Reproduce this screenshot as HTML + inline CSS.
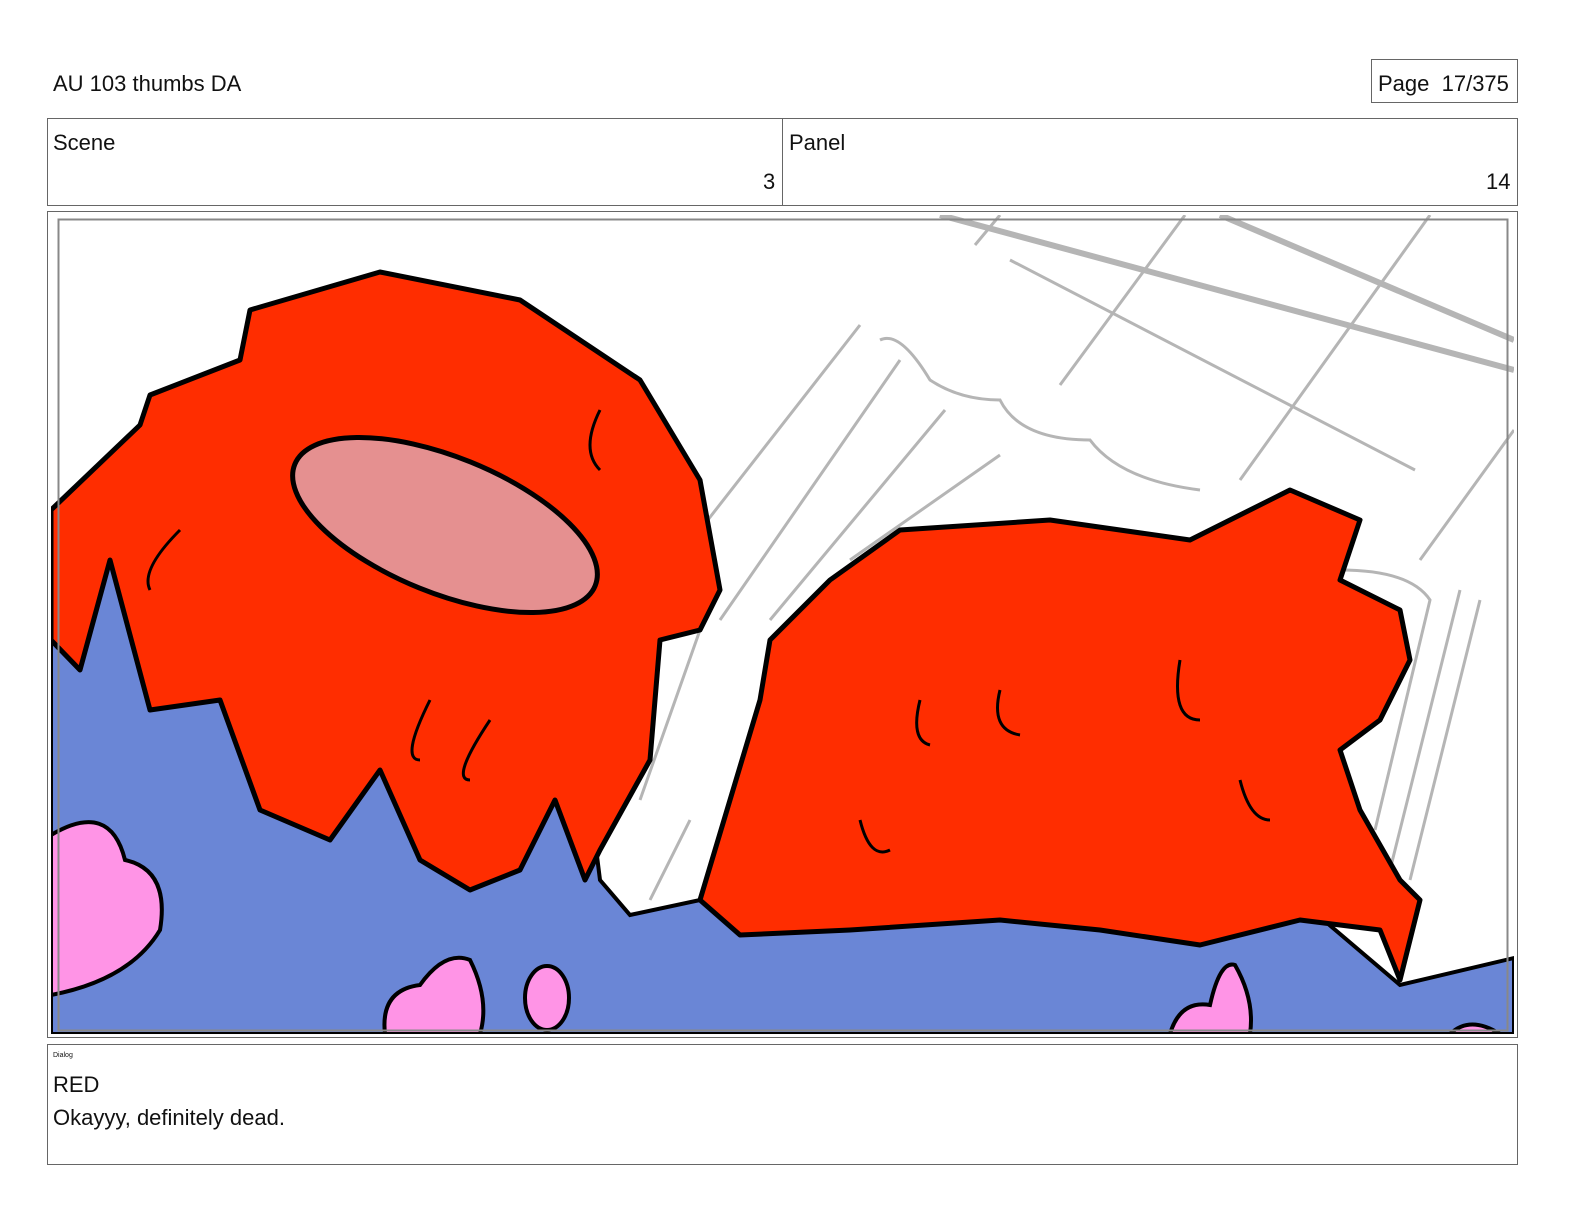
<!DOCTYPE html>
<html><head><style>
body{margin:0;width:1584px;height:1224px;background:#fff;position:relative;font-family:"Liberation Sans",sans-serif;color:#111;overflow:hidden}
.a{position:absolute}
.box{position:absolute;border:1px solid #666;box-sizing:border-box}
</style></head><body>
<div class="a" style="left:53px;top:71px;font-size:22px">AU 103 thumbs DA</div>
<div class="box" style="left:1371px;top:59px;width:147px;height:44px"></div>
<div class="a" style="left:1378px;top:71px;font-size:22px">Page&nbsp; 17/375</div>
<div class="box" style="left:47px;top:118px;width:1471px;height:88px"></div>
<div class="a" style="left:782px;top:118px;width:1px;height:88px;background:#666"></div>
<div class="a" style="left:53px;top:130px;font-size:22px">Scene</div>
<div class="a" style="left:763px;top:169px;font-size:22px">3</div>
<div class="a" style="left:789px;top:130px;font-size:22px">Panel</div>
<div class="a" style="left:1486px;top:169px;font-size:22px">14</div>
<div class="box" style="left:47px;top:211px;width:1471px;height:827px"></div>
<svg class="a" style="left:0;top:0" width="1584" height="1224">
<defs><clipPath id="c"><rect x="51" y="215" width="1463" height="819"/></clipPath></defs>
<g clip-path="url(#c)">
<g stroke="#b5b5b5" stroke-width="3" fill="none">
<path d="M940 215 L1514 370" stroke-width="6"/><path d="M1220 215 L1514 340" stroke-width="6"/>
<path d="M1000 215 L975 245 M1185 215 L1060 385 M1430 215 L1240 480 M1514 430 L1420 560 M1010 260 L1415 470"/>
<path d="M860 325 L700 530 M900 360 L720 620 M945 410 L770 620 M1000 455 L850 560 M880 340 Q900 330 930 380 Q960 400 1000 400 Q1020 440 1090 440 Q1120 480 1200 490"/>
<path d="M1340 570 Q1410 570 1430 600 L1375 830 M1480 600 L1410 880 M1460 590 L1390 870"/>
<path d="M700 630 L640 800 M690 820 L650 900"/>
</g>
<path d="M51 560 L560 560 L600 880 L630 915 L700 900 L1300 900 L1400 985 L1514 958 L1514 1034 L51 1034Z" fill="#6a86d6" stroke="#000" stroke-width="4"/>
<path d="M51 510 L140 425 L150 395 L240 360 L250 310 L380 272 L520 300 L640 380 L700 480 L720 590 L700 630 L660 640 L650 760 L600 850 L585 880 L555 800 L520 870 L470 890 L420 860 L380 770 L330 840 L260 810 L220 700 L150 710 L110 560 L80 670 L51 640Z" fill="#ff2d00" stroke="#000" stroke-width="5" stroke-linejoin="round"/>
<ellipse cx="445" cy="525" rx="162" ry="68" transform="rotate(22 445 525)" fill="#e59090" stroke="#000" stroke-width="5"/>
<path d="M700 900 L760 700 L770 640 L830 580 L900 530 L1050 520 L1190 540 L1290 490 L1360 520 L1340 580 L1400 610 L1410 660 L1380 720 L1340 750 L1360 810 L1400 880 L1420 900 L1410 940 L1400 980 L1380 930 L1300 920 L1200 945 L1100 930 L1000 920 L850 930 L740 935Z" fill="#ff2d00" stroke="#000" stroke-width="5" stroke-linejoin="round"/>
<g stroke="#000" stroke-width="3" fill="none">
<path d="M180 530 Q140 570 150 590 M600 410 Q580 450 600 470 M860 820 Q870 860 890 850 M920 700 Q910 740 930 745 M1000 690 Q990 730 1020 735 M1180 660 Q1170 720 1200 720 M1240 780 Q1250 820 1270 820 M430 700 Q400 760 420 760 M490 720 Q450 780 470 780"/>
</g>
<g fill="#ff94e6" stroke="#000" stroke-width="4">
<path d="M51 835 Q110 800 125 860 Q170 870 160 930 Q130 980 51 995Z"/>
<path d="M385 1034 Q380 990 420 985 Q445 950 470 960 Q490 1000 480 1034Z"/>
<ellipse cx="547" cy="998" rx="22" ry="32"/>
<path d="M1170 1034 Q1180 1000 1210 1005 Q1220 960 1235 965 Q1255 1000 1250 1034Z"/>
<path d="M1450 1034 Q1470 1015 1500 1034Z"/>
</g>
</g>
<rect x="58.5" y="219.5" width="1449" height="811" fill="none" stroke="#888" stroke-width="2"/>
</svg>
<div class="box" style="left:47px;top:1044px;width:1471px;height:121px"></div>
<div class="a" style="left:53px;top:1052px;font-size:7px">Dialog</div>
<div class="a" style="left:53px;top:1072px;font-size:22px">RED</div>
<div class="a" style="left:53px;top:1105px;font-size:22px">Okayyy, definitely dead.</div>
</body></html>
